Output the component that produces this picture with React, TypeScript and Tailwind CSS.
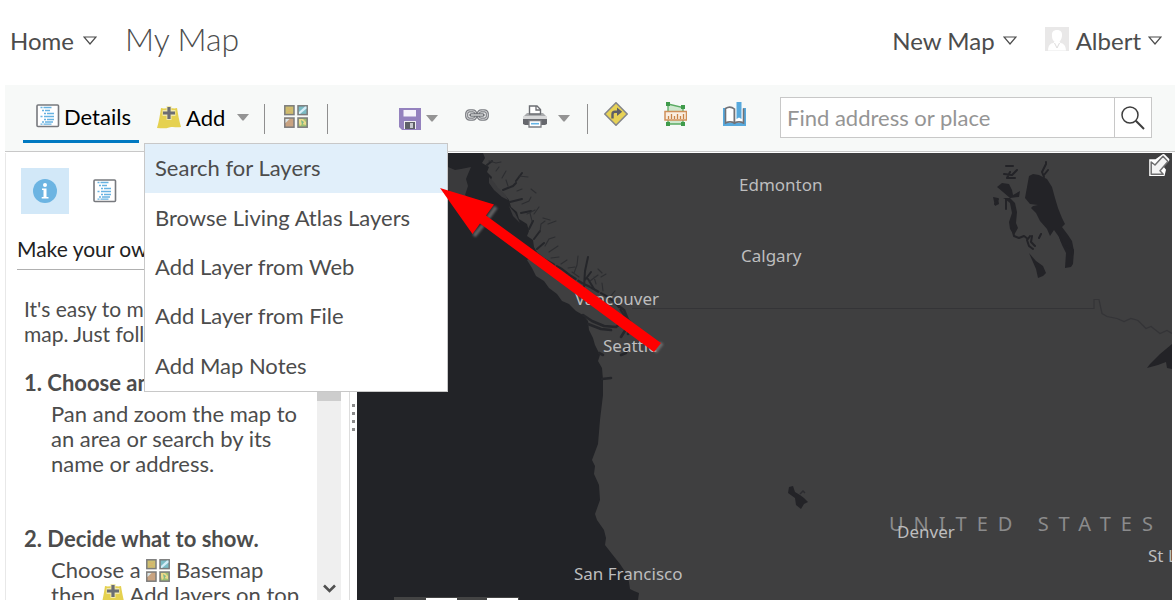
import type { ReactNode } from "react";

function HollowCaret() {
  return (
    <svg width="14" height="10" viewBox="0 0 14 10" fill="none" stroke="#4c4c4c" strokeWidth="1.2" aria-hidden="true">
      <path d="M1 1h12L7 8z" />
    </svg>
  );
}

function SolidCaret() {
  return (
    <svg width="12" height="7" viewBox="0 0 12 7" fill="#949494" aria-hidden="true">
      <path d="M0 0h12L6.600 6.500h-1.200z" />
    </svg>
  );
}

function DetailsIcon() {
  return (
    <svg width="24" height="24" viewBox="0 0 24 24" aria-hidden="true">
      <rect x="1" y="1" width="21.500" height="21.500" rx="1" fill="#fff" stroke="#77797e" strokeWidth="1.600" />
      <g stroke="#67b3e2" strokeWidth="1.300">
        <path d="M4.500 3.500h2M7.500 3.500h8M6 6.500h2M9 6.500h5M8 9.500h2M11 9.500h7M4.500 12.500h2M8 12.500h10M8 15.500h2M11 15.500h7M6 18h2M9 18h8M4.500 20.200h2M7.500 20.200h8" />
      </g>
    </svg>
  );
}

function AddIcon() {
  return (
    <svg width="24" height="23" viewBox="0 0 24 23" aria-hidden="true">
      <path d="M4 2c3 1 5 0 8 0s5 1 8 0c1 6 2 12 4 19-5 1-7-1-12 .5C8 23 4 22 0 22 2 15 3 9 4 2z" fill="#e5d150" />
      <path d="M9.500 0h5v4h4v6h-4v4h-5v-4h-4V4h4z" fill="#f1e9ad" />
      <path d="M12 1v12M6 7h12" stroke="#6b6d73" strokeWidth="3.200" />
    </svg>
  );
}

function BasemapIcon() {
  return (
    <svg width="24" height="23" viewBox="0 0 24 23" aria-hidden="true">
      <g stroke="#7c7c7c" strokeWidth="1.500">
        <rect x=".8" y=".8" width="9.200" height="8.800" fill="#cdbf70" />
        <rect x="14" y=".8" width="9.200" height="8.800" fill="#7bbcc5" />
        <rect x=".8" y="13" width="9.200" height="9.200" fill="#c9a381" />
        <rect x="14" y="13" width="9.200" height="9.200" fill="#9fc172" />
      </g>
      <path d="M15 7l6-5.500h1.500v2L16 9h-1z" fill="#d4edf8" />
      <path d="M1.500 14h4l-4 4z" fill="#d9e6ea" />
      <path d="M15 14h4l3 3v3l-4-1-2 2-1-3z" fill="#ecd98a" />
      <path d="M17 15l3 2-2 3z" fill="#79b98a" />
      <path d="M3 3l3 2 2-2M3 8l2-2 3 2" stroke="#dcb06a" fill="none" />
    </svg>
  );
}

function SaveIcon() {
  return (
    <svg width="22" height="22" viewBox="0 0 22 22" aria-hidden="true">
      <path d="M0 0h22v22H3l-3-3z" fill="#9482be" />
      <path d="M4.500 2h12.500v6.500H4.500z" fill="#f5f3fa" />
      <path d="M5 13h12v8H5z" fill="#f0eff3" />
      <path d="M6 14h10v7H6z" fill="#5e6068" />
      <path d="M11 15h3v5h-3z" fill="#c6c7ce" />
    </svg>
  );
}

function LinkIcon() {
  return (
    <svg width="24" height="12" viewBox="0 0 24 12" fill="none" aria-hidden="true">
      <g stroke="#7a7c81" strokeWidth="3.200">
        <rect x="1.700" y="1.800" width="9" height="8.400" rx="3" />
        <rect x="13.300" y="1.800" width="9" height="8.400" rx="3" />
      </g>
      <g stroke="#d8d9db" strokeWidth="1">
        <rect x="1.700" y="1.800" width="9" height="8.400" rx="3" />
        <rect x="13.300" y="1.800" width="9" height="8.400" rx="3" />
      </g>
      <path d="M6 6h12" stroke="#6e7076" strokeWidth="3.600" strokeLinecap="round" />
      <path d="M6 6h12" stroke="#e8e9ea" strokeWidth="1.200" />
    </svg>
  );
}

function PrintIcon() {
  return (
    <svg width="24" height="23" viewBox="0 0 24 23" aria-hidden="true">
      <path d="M4 8h16l4 4H0z" fill="#a9abad" />
      <path d="M6.500 9V1H14l3.500 3.500V9z" fill="#fff" stroke="#6b6d72" strokeWidth="1.400" />
      <path d="M13 1v4h4" fill="none" stroke="#6b6d72" strokeWidth="1.300" />
      <path d="M0 11h24v3H0z" fill="#d8d9da" />
      <path d="M0 14h24v5l-2 1H2l-2-1z" fill="#66686d" />
      <path d="M6 15.500h12v6.500H6z" fill="#fff" stroke="#7b7d82" strokeWidth="1.300" />
      <path d="M8 18.700h8" stroke="#63b4e6" strokeWidth="1.600" />
    </svg>
  );
}

function DirectionsIcon() {
  return (
    <svg width="24" height="24" viewBox="0 0 24 24" aria-hidden="true">
      <path d="M12 .8L23.200 12 12 23.200.8 12z" fill="#e7d255" stroke="#85868a" strokeWidth="1.600" strokeLinejoin="round" />
      <path d="M8.500 16.500v-4.200c0-1.600 1-2.500 2.500-2.500h4" fill="none" stroke="#5d5f66" strokeWidth="2.400" />
      <path d="M13 5.500l5.200 4.300-5.200 4.200z" fill="#5d5f66" />
    </svg>
  );
}

function MeasureIcon() {
  return (
    <svg width="23" height="24" viewBox="0 0 23 24" aria-hidden="true">
      <path d="M4 2l15 3.500v16.500H4z" fill="#cfe8cf" stroke="#5aab63" strokeWidth="1.300" />
      <path d="M1 9.500h21.500v8.500H1z" fill="#faeee0" stroke="#cf9059" strokeWidth="1.500" />
      <path d="M4.500 17v-3M7.500 17v-5M10.500 17v-3M13.500 17v-5M16.500 17v-3M19.500 17v-5" stroke="#c98447" strokeWidth="1.300" />
      <g fill="#3f9b4b">
        <rect x="2" width="4" height="4" />
        <rect x="17" y="3" width="4" height="4" />
        <rect x="2" y="20" width="4" height="4" />
        <rect x="17" y="20" width="4" height="4" />
      </g>
    </svg>
  );
}

function BookmarkIcon() {
  return (
    <svg width="23" height="24" viewBox="0 0 23 24" aria-hidden="true">
      <path d="M0 6h3v15h17V6h3v18H0z" fill="#57a9dd" />
      <path d="M2.500 21V6.500c3-2 6.500-1.500 9 .5v14c-3-1.500-6-1.500-9 0z" fill="#fff" stroke="#707277" strokeWidth="1.600" />
      <path d="M11.500 21V7h9v14c-3-1.500-6-1.500-9 0z" fill="#fff" />
      <path d="M11.500 7v14c3-1.500 6-1.500 9 0V6.500" fill="none" stroke="#707277" strokeWidth="1.600" />
      <path d="M13.500 0h5v17l-2.500-1.500-2.500 1.500z" fill="#57a9dd" />
    </svg>
  );
}

function InfoIcon() {
  return (
    <svg width="24" height="24" viewBox="0 0 24 24" aria-hidden="true">
      <circle cx="12" cy="12" r="12" fill="#6cb4e2" />
      <circle cx="12" cy="6" r="2" fill="#fff" />
      <path d="M9 9.500h4.500v8.500H15.500v1.500H8.700V18H10.500v-7H9z" fill="#fff" />
    </svg>
  );
}

function AvatarIcon() {
  return (
    <svg width="24" height="24" viewBox="0 0 24 24" aria-hidden="true">
      <path d="M0 0h24v24H0z" fill="#e9e8e8" />
      <path d="M12 3c3.500 0 5.500 2 5 6-.3 3-1.500 4.500-2.500 5.500l1 1.500c3 .5 5 2 5.500 7.500H3C3.500 18 5 16.500 8.500 16l1-1.500C8 13.500 7 12 7 9c-.5-4 1.500-6 5-6z" fill="#fff" />
      <path d="M9.500 16l2.500 5 2.500-5" fill="none" stroke="#dedddd" />
    </svg>
  );
}

function SearchIcon() {
  return (
    <svg width="24" height="24" viewBox="0 0 24 24" fill="none" stroke="#3d3d3d" strokeWidth="1.500" aria-hidden="true">
      <circle cx="9" cy="9" r="8" />
      <path d="M14.800 14.800l8.200 8.200" strokeWidth="2" />
    </svg>
  );
}

function ExpandIcon() {
  return (
    <svg width="22" height="23" viewBox="0 0 22 23" aria-hidden="true">
      <path d="M1.200 5.200H7.500l7-5q1.500-.5 2.500.5l4 4q.8 1.200 0 2.200L15.500 12.500l2.500 3.200-1.500 6.300H1.200z" fill="#fff" />
      <path d="M3.200 8v12.200h12L12 16.800l8-9.300-5-5.200-8 8.700z" fill="#f4f4f4" stroke="#6f6f70" strokeWidth="1.500" strokeLinejoin="round" />
    </svg>
  );
}

function MapCanvas() {
  return (
    <svg width="815" height="447" viewBox="357 153 815 447" className="absolute left-0 top-0" aria-hidden="true">
      <path
        fill="#222327"
        d="M357 153H483L485 158 482 163 489 167 487 172 492 177 490 183 496 188 503 193 509 200 511 207 517 212 519 219 527 224 529 231 527 236 533 240 534 247 537 252 533 256 527 260 532 268 536 276 544 281 549 288 557 294 562 301 569 304 576 311 583 315 588 321 589 330 593 338 595 345 600 355 598 361 602 368 603 380 603 395 600 420 598 444 592 460 595 466 594 474 599 485 600 500 595 514 597 520 604 530 606 538 605 545 612 554 620 564 628 576 630 589 634 591 639 593 638 600H357z"
      />
      <g fill="#3a3a3c">
        <path d="M448 167l7 3 6-1 10-2-3 7-2 5 2 7-3 9 8 7-9-5-6-3-5 2-6-8z" />
        <path d="M489 177l5 5 4 6 7 6 3 6-6-3-8-7-5-7zM509 206l6 7 5 10-7-7z" />
      </g>
      <g fill="none" stroke="#25262a" strokeLinecap="round" strokeLinejoin="round">
        <path d="M535 252l9 7 9 5 9 5 9 7 11 7 8 4 9 5 9 5 8 6 6 9 4 6" strokeWidth="2.200" strokeDasharray="13 2 8 3" />
        <path d="M583 315l9 6 12 5 12 1 5-4M588 324l13 5 10 1" strokeWidth="2.600" />
        <path d="M616 304l8 6 4 10-2 9-5 8M625 317l5 5-2 12M603 355l-4-2M602 379l9-1M621 355l5-2 1-5" strokeWidth="2.600" />
        <path d="M487 165l5-4M503 190l10-4 3-3M516 181l6-8M510 202l12-3M521 213l10-2M529 229l4-8M534 239l6-8M537 249l7-6M584 287l1-16 3-14M585 280l6-8M594 289l-6-10" strokeWidth="2" />
      </g>
      <g fill="none" stroke="#2d2e31" strokeWidth="1.100" strokeLinecap="round">
        <path d="M489 161l7 2 5-1M496 171l3-4M502 178l4-7M508 186l-2-6M517 191l5-2M522 204l7-3 2-4M527 214l8-4M532 221l-2-8M540 232l1-8 4-3M545 246l4-7 6-2M549 252l9-6M543 218l7 2M551 258l8-1M561 264l6-4M568 268l7-1M574 273l3-8 1-9M579 277l-7-5M590 281l8-6M596 284l-2-7M603 291l-1-8M609 298l6-7M548 224l8-3M519 176l9 1M531 189l5 4M539 207l-5 7M601 277l5-3M598 269l4 4" />
      </g>
      <g fill="none" stroke="#343437" strokeWidth="1.200">
        <path d="M632 308.500H1094v-9h5l3 14 5 3 10 2 7 3 7-3 7 2 8 8 5-2 9 7 7-3 5 3" />
      </g>
      <g fill="#232327">
        <path d="M1029 176l4-2 6 1 8 4 5 8 3 11 3 10 4 10 3 6-3 3 6 8 4 6 2 10-1 13-2 3-6 1 1-15-4-8-3-8-5-7-4 6-3-7-7-8-4-8-5-5 2-2 5-1-8-1-5-6z" />
        <path d="M997 187l5-4 7 1 3 6 1 5 7-4-1 6-9 1-7-6zM993 197l5 1 1 6-4 2zM1003 198l7 0 5 5 2 9-1 11 2 5-4 7-4-6-1-7 3-9-2-10-5-4z" />
        <path d="M1029 253l7 8 7 5 3 7-3 3-5 2-2-9zM1172 344v25l-5-1-1-6-8 3-11 3 3-4 10-10zM789 487l4-1 2 6 5 3 4 3 4 4-4 2-3 5-5-4-1-7-7-5z" />
      </g>
      <g fill="none" stroke="#232327" strokeWidth="2" strokeLinecap="round" strokeLinejoin="round">
        <path d="M1006 166h7M1004 174l8 1 5-5M1010 172l-3 6h8M1044 177l-2-5 4-8M1046 162v1M1044 175l4-5M1012 228l2 8 5 2 5-2 4 3 2-3M1027 240l2 6 4 3M1032 236l-1 6 4 4M1039 238l2-4M1006 199v10M998 199l-3 5M1059 234l3 8M1066 246l7 4-1 5" />
      </g>
      <path d="M800 494l3-3 2 2" fill="none" stroke="#2c2c30" strokeWidth="1.500" />
    </svg>
  );
}

const cities = [
  { name: "Edmonton", place: "left-[382px] top-[20px]" },
  { name: "Calgary", place: "left-[384px] top-[91px]" },
  { name: "Vancouver", place: "left-[218px] top-[134px]" },
  { name: "Seattle", place: "left-[246px] top-[181px]" },
  { name: "San Francisco", place: "left-[217px] top-[409px]" },
  { name: "Denver", place: "left-[540px] top-[367px]" },
  { name: "St Louis", place: "left-[791px] top-[391px]" },
];

const addOptions = [
  "Search for Layers",
  "Browse Living Atlas Layers",
  "Add Layer from Web",
  "Add Layer from File",
  "Add Map Notes",
];

function ToolButton({ label, children }: { label: string; children: ReactNode }) {
  return (
    <button type="button" aria-label={label} className="flex shrink-0 items-center gap-[5px]">
      {children}
    </button>
  );
}

function Separator({ className }: { className: string }) {
  return <div className={`h-[30px] w-px shrink-0 bg-[#8f8f8f] ${className}`} />;
}

function AddMenu() {
  return (
    <ul className="absolute -left-[13px] top-[58px] z-20 grid h-[249px] w-[304px] grid-rows-5 border border-[#c8c8c8] bg-white">
      {addOptions.map((option, index) => (
        <li key={option} className={index === 0 ? "bg-[#e1effa]" : "bg-white"}>
          <button type="button" className="flex h-full w-full items-center px-[10px] pb-[2px] text-left text-[22px] text-[#4c4c4c]">
            {option}
          </button>
        </li>
      ))}
    </ul>
  );
}

function Toolbar() {
  return (
    <div className="ml-[5px] flex h-[67px] shrink-0 items-start border-b border-[#c8c8c8] bg-[#f7f9f8] pr-[23px]">
      <button
        type="button"
        className="ml-[18px] flex h-[58px] w-[116px] shrink-0 items-center gap-1 border-b-3 border-[#0079c1] pl-[13px] pt-[7px] text-[22px] text-black"
      >
        <DetailsIcon />
        Details
      </button>
      <div className="relative ml-[18px] w-[92px] shrink-0">
        <button type="button" className="flex h-[58px] w-full items-center pt-[7px] text-[22px] text-black">
          <AddIcon />
          <span className="ml-[5px] mr-auto">Add</span>
          <SolidCaret />
        </button>
        <AddMenu />
      </div>
      <div className="flex h-[67px] items-center">
        <Separator className="ml-[15px]" />
        <div className="ml-[19px] flex pb-[4px]">
          <ToolButton label="Basemap">
            <BasemapIcon />
          </ToolButton>
        </div>
        <Separator className="ml-[19px]" />
        <div className="ml-[71px] flex">
          <ToolButton label="Save">
            <SaveIcon />
            <SolidCaret />
          </ToolButton>
        </div>
        <div className="ml-[27px] flex pb-[8px]">
          <ToolButton label="Share">
            <LinkIcon />
          </ToolButton>
        </div>
        <div className="ml-[34px] flex pb-[4px]">
          <ToolButton label="Print">
            <PrintIcon />
            <span className="ml-[6px] mt-[4px]">
              <SolidCaret />
            </span>
          </ToolButton>
        </div>
        <Separator className="ml-[17px]" />
        <div className="ml-[16px] flex gap-[36px] pb-[9px]">
          <ToolButton label="Directions">
            <DirectionsIcon />
          </ToolButton>
          <ToolButton label="Measure">
            <MeasureIcon />
          </ToolButton>
          <ToolButton label="Bookmarks">
            <BookmarkIcon />
          </ToolButton>
        </div>
      </div>
      <form className="ml-[34px] mt-3 flex h-[41px] min-w-0 flex-1 border border-[#c8c8c8] bg-white">
        <input
          type="text"
          aria-label="Find address or place"
          placeholder="Find address or place"
          className="min-w-0 flex-1 px-[6px] text-[22px] text-[#4c4c4c] outline-none placeholder:text-[#959595]"
        />
        <button type="button" aria-label="Search" className="flex w-[37px] shrink-0 items-center justify-center border-l border-[#c8c8c8]">
          <SearchIcon />
        </button>
      </form>
    </div>
  );
}

function Sidebar() {
  return (
    <aside className="flex w-[336px] shrink-0 flex-col border-l border-[#e8e8e8] bg-white">
      <div className="flex gap-[24px] pl-[15px] pt-[15px]">
        <button type="button" aria-label="About" className="flex h-[46px] w-[48px] items-center justify-center bg-[#d2e8f8]">
          <InfoIcon />
        </button>
        <button type="button" aria-label="Content" className="flex h-[46px] items-center">
          <DetailsIcon />
        </button>
      </div>
      <h2 className="ml-[11px] mt-[20px] h-[36px] shrink-0 border-b border-[#b0b0b0] pt-[2px] text-[21px] leading-[25px] text-[#222]">Make your own map</h2>
      <div className="flex min-h-0 flex-1">
        <div className="min-w-0 flex-1 overflow-hidden pl-[18px] pr-[2px] pt-[26px] text-[22px] leading-[25px] text-[#4c4c4c]">
          <p className="text-[21px]">It's easy to make your own map. Just follow these steps.</p>
          <h3 className="mt-[24px] font-bold">1. Choose an area.</h3>
          <p className="ml-[27px] mt-[6px]">Pan and zoom the map to an area or search by its name or address.</p>
          <h3 className="mt-[50px] font-bold">2. Decide what to show.</h3>
          <p className="ml-[27px] mt-[6px]">
            Choose a <span className="inline-block align-[-4px]"><BasemapIcon /></span> Basemap
            <br />
            then <span className="inline-block align-[-4px]"><AddIcon /></span> Add layers on top
          </p>
        </div>
        <div className="flex w-[24px] shrink-0 flex-col justify-between bg-[#efefef]">
          <div className="h-[131px] bg-[#cdcdcd]" />
          <svg width="24" height="24" viewBox="0 0 24 24" fill="none" stroke="#505050" strokeWidth="2.600" aria-hidden="true">
            <path d="M7 9.500l5.500 5.500L18 9.500" />
          </svg>
        </div>
      </div>
    </aside>
  );
}

function Splitter() {
  return (
    <div className="ml-[8px] flex w-[8px] shrink-0 flex-col items-center gap-[5px] border-l border-[#ddd] pt-[251px]">
      <div className="size-[3px] bg-[#8b8b8b]" />
      <div className="size-[3px] bg-[#8b8b8b]" />
      <div className="size-[3px] bg-[#8b8b8b]" />
      <div className="size-[3px] bg-[#8b8b8b]" />
    </div>
  );
}

function MapView() {
  return (
    <main className="relative mr-[3px] min-w-0 flex-1 overflow-hidden bg-[#3f3f40] font-['Noto_Sans',sans-serif]">
      <MapCanvas />
      <span className="absolute left-[532px] top-[359px] whitespace-nowrap text-[20px] leading-6 tracking-[10px] text-[#8b8b8c]">UNITED STATES</span>
      {cities.map((city) => (
        <span key={city.name} className={`absolute whitespace-nowrap text-[17px] leading-6 text-[#bdbdbe] ${city.place}`}>
          {city.name}
        </span>
      ))}
      <button type="button" aria-label="Expand overview" className="absolute right-[2px] top-[1px]">
        <ExpandIcon />
      </button>
      <div className="absolute bottom-0 left-[37px] flex h-[3px] w-[125px] border-t border-[#444] bg-[#444]">
        <div className="ml-[32px] w-[31px] bg-white" />
        <div className="ml-[30px] w-[31px] bg-white" />
      </div>
    </main>
  );
}

function PointerArrow() {
  return (
    <svg width="240" height="180" viewBox="430 180 240 180" className="pointer-events-none absolute left-[430px] top-[180px] z-30" aria-hidden="true">
      <defs>
        <filter id="arrow-shadow" x="-10%" y="-10%" width="120%" height="120%">
          <feGaussianBlur stdDeviation="1" />
        </filter>
      </defs>
      <g filter="url(#arrow-shadow)" stroke="#8a8a8a" opacity=".6">
        <path d="M474 236l9-11M496 207l-8 11M655 352l7-9" strokeWidth="4" />
      </g>
      <path d="M440 188l54 16.500-8 11L661 343l-7 9L480 223.500l-7.500 10.500z" fill="#f00" />
    </svg>
  );
}

export default function App() {
  return (
    <div className="relative flex h-screen flex-col overflow-hidden bg-white font-['Lato',sans-serif]">
      <header className="flex h-[85px] shrink-0 items-center pb-[3px] pl-[10px] pr-[13px] text-[24px] text-[#4c4c4c]">
        <button type="button" className="flex items-center gap-[9px]">
          Home
          <HollowCaret />
        </button>
        <h1 className="ml-[28px] pb-1 text-[32px] font-light">My Map</h1>
        <button type="button" className="ml-auto flex items-center gap-[8px]">
          New Map
          <HollowCaret />
        </button>
        <button type="button" className="ml-[28px] flex items-center gap-[7px]">
          <span className="pb-[5px]">
            <AvatarIcon />
          </span>
          Albert
          <HollowCaret />
        </button>
      </header>
      <Toolbar />
      <div className="flex min-h-0 flex-1 pl-[5px] pt-px">
        <Sidebar />
        <Splitter />
        <MapView />
      </div>
      <PointerArrow />
    </div>
  );
}
